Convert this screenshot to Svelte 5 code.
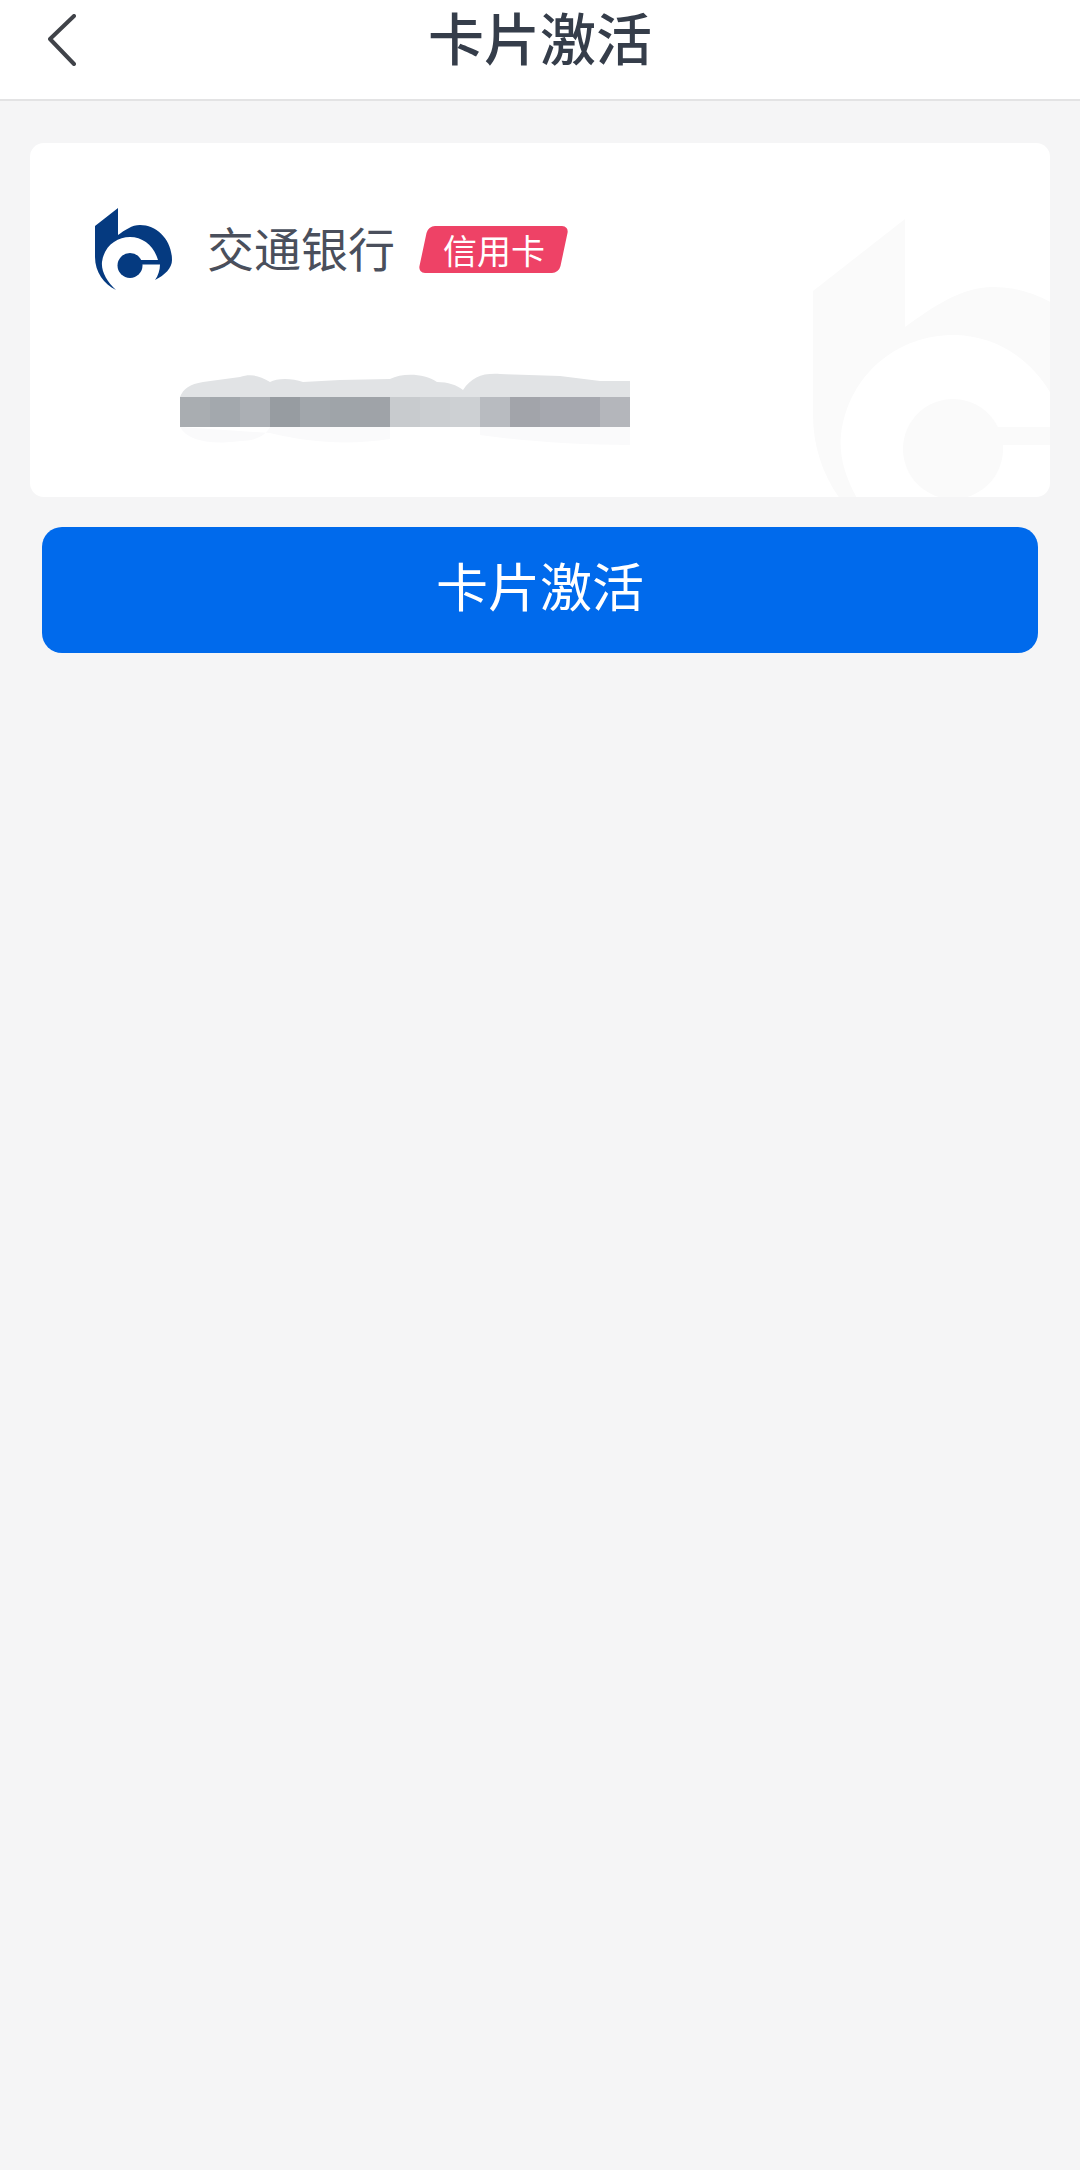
<script>
  // mask pixels of the card number, one tile per 30px
  const maskTiles = ['#a9adb1', '#a3a8ad', '#abafb4', '#979ca1', '#a1a6ab', '#9fa4a9', '#9fa3a8', '#c8cbce', '#cbced1', '#cdd0d3', '#b8bbc0', '#a2a4aa', '#a6a8af', '#a6a8af', '#b4b6bb'];
  const logoPath = 'M33 8 L10 26 V57 C10 72 19 84 31 90 C22 82 16 71 17 62 C19 46 32 37 45 37 C58 37 69 46 73 60 H52 V64.5 H75 C75 70 73 76 70 80 C80 75 87 68 87 60 C87 40 72 25 55 25 C47 25 40 30 33 35 Z';
</script>

{#snippet bankLogo(cls)}
  <svg class={cls} viewBox="0 0 100 100" aria-hidden="true">
    <path d={logoPath} />
    <circle cx="45" cy="65.5" r="12.5" />
  </svg>
{/snippet}

<div class="page">
  <header class="topbar">
    <button class="topbar__back" aria-label="返回">
      <svg width="28" height="52" viewBox="0 0 28 52" fill="none" aria-hidden="true">
        <path d="M26 2 L2 25 L26 50" stroke="#404349" stroke-width="4" stroke-linecap="round" stroke-linejoin="round" />
      </svg>
    </button>
    <h1 class="topbar__title">卡片激活</h1>
  </header>

  <main class="content">
    <section class="card">
      {@render bankLogo('card__watermark')}
      <div class="card__bank">
        {@render bankLogo('card__logo')}
        <span class="card__name">交通银行</span>
        <span class="card__badge"><span class="card__badge-text">信用卡</span></span>
      </div>
      <div class="card__number">
        <svg class="card__smudge" viewBox="0 -24 450 72" aria-hidden="true">
          <path fill="#e1e3e5" d="M0 0 C3 -8 10 -13 23 -15 L60 -20 C72 -24 82 -20 90 -15 C97 -19 112 -19 123 -15 L160 -17 L210 -18 C222 -24 244 -24 257 -15 C268 -15 277 -12 283 -7 C292 -20 302 -24 320 -23 L380 -21 L420 -16 H450 V0 Z" />
          <path fill="#fafafb" d="M0 30 C8 44 30 48 60 44 C76 44 86 38 90 30 H210 V42 C170 48 130 46 90 36 Z" />
          <path fill="#fafafb" d="M300 30 H450 V48 C400 48 340 44 300 38 Z" />
        </svg>
        <div class="card__tiles">
          {#each maskTiles as color}
            <span class="card__tile" style="background: {color}"></span>
          {/each}
        </div>
      </div>
    </section>

    <button class="activate">卡片激活</button>
  </main>
</div>

<style>
  :global(body) {
    margin: 0;
    background: #f5f5f6;
  }
  .page {
    min-height: 2170px;
    background: #f5f5f6;
    font-family: "Noto Sans CJK SC", "Noto Sans", sans-serif;
  }
  .topbar {
    display: grid;
    grid-template-columns: 1fr auto 1fr;
    align-items: center;
    height: 99px;
    background: #fff;
    border-bottom: 2px solid #e3e3e4;
  }
  .topbar__back {
    justify-self: start;
    display: flex;
    margin: 0 0 20px 48px;
    padding: 0;
    border: 0;
    background: none;
  }
  .topbar__title {
    margin: 0 0 27px;
    font-size: 56px;
    line-height: 60px;
    font-weight: 500;
    color: #353d4a;
  }
  .content {
    padding: 42px 30px;
  }
  .card {
    position: relative;
    overflow: hidden;
    height: 354px;
    box-sizing: border-box;
    padding: 57px 0 0 55px;
    background: #fff;
    border-radius: 14px;
  }
  .card :global(.card__watermark) {
    position: absolute;
    left: 743px;
    top: 44px;
    width: 400px;
    height: 400px;
    fill: #fafafa;
  }
  .card__bank {
    position: relative;
    display: flex;
    align-items: center;
    height: 100px;
  }
  .card :global(.card__logo) {
    width: 100px;
    height: 100px;
    flex: none;
    fill: #053a80;
  }
  .card__name {
    margin: -7px 0 0 22px;
    font-size: 47px;
    line-height: 60px;
    color: #4a4f5c;
  }
  .card__badge {
    display: flex;
    align-items: center;
    justify-content: center;
    width: 141px;
    height: 47px;
    margin: -2px 0 0 28px;
    background: #ee4266;
    border-radius: 7px;
    transform: skewX(-12deg);
  }
  .card__badge-text {
    font-size: 34px;
    line-height: 47px;
    color: #fff;
    transform: skewX(12deg);
  }
  .card__number {
    position: relative;
    width: 450px;
    margin: 97px 0 0 95px;
  }
  .card__smudge {
    position: absolute;
    left: 0;
    top: -24px;
    width: 450px;
    height: 72px;
    display: block;
    filter: blur(0.6px);
  }
  .card__tiles {
    position: relative;
    display: flex;
    height: 30px;
  }
  .card__tile {
    flex: 1;
  }
  .activate {
    display: block;
    width: 996px;
    height: 126px;
    margin: 30px 12px 0;
    padding: 0 0 11px;
    border: 0;
    border-radius: 20px;
    background: #006aec;
    color: #fff;
    font-family: inherit;
    font-size: 52px;
  }
</style>
